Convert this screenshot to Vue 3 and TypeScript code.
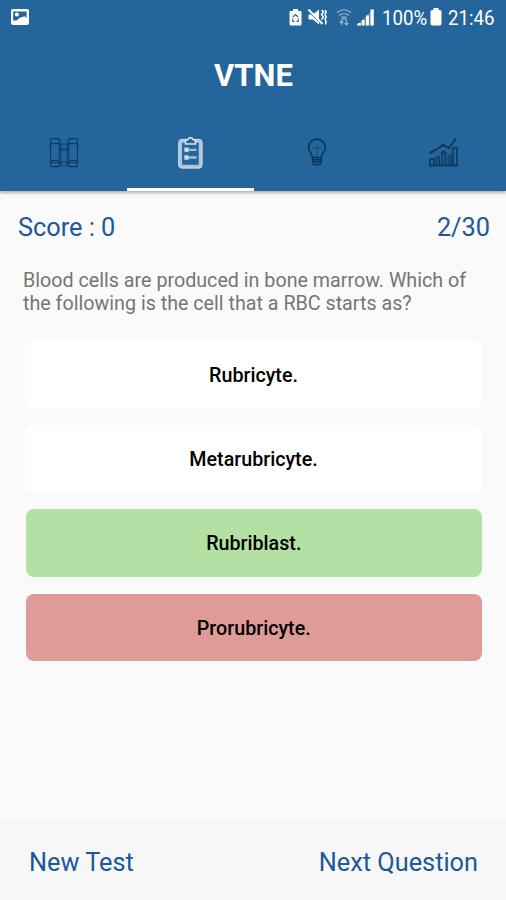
<script setup lang="ts">
import { ref } from 'vue'

interface Answer {
  text: string
  state: 'plain' | 'correct' | 'wrong'
}

const activeTab = ref<number>(1)
const tabs: string[] = ['library', 'quiz', 'hints', 'stats']
const answers: Answer[] = [
  { text: 'Rubricyte.', state: 'plain' },
  { text: 'Metarubricyte.', state: 'plain' },
  { text: 'Rubriblast.', state: 'correct' },
  { text: 'Prorubricyte.', state: 'wrong' },
]
</script>

<template>
  <div class="screen">
    <header class="header">
      <div class="status">
        <svg class="photo" width="18" height="16" viewBox="0 0 18 16">
          <rect width="18" height="16" rx="2" fill="#fff" />
          <path d="M2.200 2.500h13.400v6.500l-2-1.700-3.400 1-2.200 1-2 2-3.800.5z" fill="#24659b" />
          <circle cx="5.800" cy="5.600" r="2" fill="#fff" />
        </svg>
        <div class="status-right">
          <svg class="system" width="88" height="20" viewBox="0 0 88 20">
            <path d="M5 3V1h5v2h2.500q1 0 1 1v12q0 1.500-1.500 1.500H3Q1.500 17.500 1.500 16V4q0-1 1-1z" fill="#fff" />
            <path d="M4.800 9l2.700-2.500L10.200 9M4.800 10.500v3h1.700M10.200 10.500v3H8.500" fill="none" stroke="#24659b" stroke-width="1.200" />
            <path d="M20.500 6.500H25L31 1.500v15l-6-5h-4.500z" fill="#fff" />
            <path d="M20 2.500l14 14" stroke="#24659b" stroke-width="1.500" />
            <path d="M20.500 1.500l14 14.500" stroke="#fff" stroke-width="2" />
            <path d="M33.500 2l2 2-2 2.500 2 2.500-2 2.500M37 2l1.200 2-1.200 2.500 1.200 2.500-1.200 2.500 1.200 2.500-1 2.500" fill="none" stroke="#fff" stroke-width="1.500" />
            <g fill="none" stroke="#94b6d2" stroke-width="1.200">
              <path d="M49 4.500q7-5.500 14 0M51 7.500q5-4 10 0M53 10q3-2.500 6 0M56 10l-3 3M56 10l3 3M53.500 17v-4M51.500 15l2-2 2 2M58.500 13v4M56.500 15l2 2 2-2" />
            </g>
            <path d="M70 15h2.800v2.500H69zM73.800 12h2.800v5.500h-2.800zM78 7.500h2.900v10H78zM82.500 1.500h3.300v16h-3.300z" fill="#fff" />
            <path d="M68 17.500L85 1.500v16z" fill="#fff" opacity="0.25" />
          </svg>
          <span class="percent"><span class="narrow">100%</span></span>
          <svg class="battery" width="12" height="18" viewBox="0 0 12 18">
            <path d="M3.500 2V0h5v2H10q1.500 0 1.500 1.500v12q0 2-2 2h-7q-2 0-2-2v-12Q.5 2 2 2z" fill="#fff" />
          </svg>
          <span class="clock"><span class="narrow">21:46</span></span>
        </div>
      </div>
      <h1 class="title">VTNE</h1>
      <nav class="tabs">
        <button
          v-for="(tab, index) in tabs"
          :key="tab"
          class="tab"
          :class="{ active: activeTab === index }"
          @click="activeTab = index"
        >
          <svg v-if="tab === 'library'" width="30" height="30" viewBox="0 0 30 30" fill="none" stroke="#0c3a61" stroke-width="1.200">
            <rect x="1.500" y="0.700" width="9" height="28" rx="2" />
            <rect x="19.500" y="0.700" width="9" height="28" rx="2" />
            <path d="M1.500 5.700h9M19.500 5.700h9M1.500 22.500h9M1.500 24.300h9M19.500 22.500h9M19.500 24.300h9M10.500 6h9M10.500 11h9M10.500 24h9" />
            <path d="M11 12.500h8M11 28h8M12 6v22M18 6v22" stroke-width="0.700" />
          </svg>
          <svg v-else-if="tab === 'quiz'" width="30" height="32" viewBox="0.500 0 30 32" fill="none">
            <rect x="4.900" y="4" width="20" height="25.500" rx="2" stroke="#aec1de" stroke-width="3.400" />
            <rect x="3.200" y="2.400" width="23.400" height="28.700" rx="3" stroke="#dce7f2" stroke-width="0.900" />
            <path d="M10 3h2q1-2.300 3-2.300T18 3h2v4H10z" fill="#24659b" stroke="#dce7f2" stroke-width="1.500" />
            <circle cx="11" cy="12.800" r="2.300" fill="#d4e0ee" />
            <circle cx="11" cy="20.500" r="2.300" fill="#d4e0ee" />
            <path d="M9 10.300l4 5M13 10.300l-4 5M9 18l4 5M13 18l-4 5" stroke="#d4e0ee" />
            <path d="M13 12.800h8M13 20.500h8" stroke="#a4bdd9" stroke-width="2.300" />
          </svg>
          <svg v-else-if="tab === 'hints'" width="30" height="30" viewBox="0 0 30 30" fill="none" stroke="#0c3457" stroke-width="1.600">
            <path d="M10.500 19.500c0-4-4-5-4-10a8.400 8.400 0 0 1 16.800 0c0 5-4 6-4 10z" />
            <path d="M10.500 19.500v4h9v-4M11.500 24v2.500h7V24M10.500 21.500h9" />
            <path d="M11 9.500h8M14 9.500l1 2 1-2M15 12v7" stroke="#164a77" stroke-width="0.900" />
          </svg>
          <svg v-else width="30" height="30" viewBox="-1 0 30 30" fill="none" stroke="#0c3457" stroke-width="1.500">
            <path d="M2 14.500l7-4L14 7l6 3 6-8" stroke-width="1.600" />
            <g fill="#0c3457" stroke="none">
              <circle cx="2" cy="14.500" r="1.400" />
              <circle cx="14" cy="7" r="1.400" />
              <circle cx="20" cy="9.800" r="1.300" />
              <circle cx="26" cy="2" r="1.500" />
            </g>
            <path d="M1 21h4v6.500H1zM24 10h4v17.500h-4z" />
            <path d="M7 18.500h3.500v9H7zM12.500 15H17v12.500h-4.500zM19 17h3.500v10.500H19z" fill="#174f82" stroke="#113f69" stroke-width="1" />
            <path d="M12 15l2.700-1.700 2.800 1.700M0 27.500h29" stroke-width="1.300" />
          </svg>
        </button>
      </nav>
    </header>

    <main class="content">
      <div class="summary">
        <span class="score">Score : 0</span>
        <span class="progress">2/30</span>
      </div>
      <p class="question">Blood cells are produced in bone marrow. Which of the following is the cell that a RBC starts as?</p>
      <div class="answers">
        <button v-for="answer in answers" :key="answer.text" class="answer" :class="answer.state">
          {{ answer.text }}
        </button>
      </div>
    </main>

    <footer class="footer">
      <button class="action new">New Test</button>
      <button class="action next">Next Question</button>
    </footer>
  </div>
</template>

<style>
body {
  margin: 0;
}
</style>

<style scoped>
.screen {
  display: flex;
  flex-direction: column;
  width: 506px;
  height: 900px;
  overflow: hidden;
  background: #fafafa;
  font-family: Roboto, "Liberation Sans", sans-serif;
}
button {
  margin: 0;
  padding: 0;
  border: 0;
  background: none;
  font-family: inherit;
}
.header {
  height: 191px;
  flex: none;
  display: flex;
  flex-direction: column;
  background: #24659b;
  box-shadow: 0 2px 3px rgba(0, 0, 0, 0.3);
}
.status {
  box-sizing: border-box;
  height: 33px;
  display: flex;
  justify-content: space-between;
  align-items: flex-start;
  padding: 8px 11px 0 11px;
  border-bottom: 1px solid #205e93;
  color: #fff;
}
.photo {
  margin-top: 1px;
}
.status-right {
  display: flex;
  height: 20px;
}
.percent,
.clock {
  font-size: 21px;
  line-height: 20px;
  white-space: nowrap;
}
.narrow {
  display: inline-block;
  transform: scaleX(0.89);
  transform-origin: 0 50%;
}
.percent {
  width: 48px;
  margin-left: 6px;
}
.clock {
  width: 47px;
  margin-left: 6px;
}
.title {
  height: 80px;
  margin: 0;
  padding-left: 1px;
  color: #fff;
  font-size: 31px;
  font-weight: 700;
  line-height: 85px;
  text-align: center;
}
.tabs {
  flex: 1;
  display: grid;
  grid-template-columns: 127px 127px 126px 126px;
}
.tab {
  display: flex;
  justify-content: center;
  align-items: center;
  padding-top: 4px;
  border-bottom: 3px solid transparent;
}
.tab.active {
  border-bottom-color: #fff;
}
.content {
  flex: 1;
}
.summary {
  display: flex;
  justify-content: space-between;
  padding: 22px 16px 0 18px;
  color: #20579a;
  font-size: 25.3px;
  line-height: 30px;
}
.question {
  margin: 26px 24px 0 23px;
  color: #757575;
  font-size: 19.7px;
  line-height: 23px;
}
.answers {
  display: flex;
  flex-direction: column;
  gap: 17px;
  margin: 25.5px 24px 0 25px;
}
.answer {
  box-sizing: border-box;
  height: 67.4px;
  padding-top: 2px;
  border-radius: 8px;
  color: #000;
  font-size: 19.7px;
  font-weight: 470;
}
.plain {
  background: #fff;
}
.correct,
.wrong {
  margin: 0 0.5px 0 1px;
}
.correct {
  background: #b2e1a3;
}
.wrong {
  background: #de9b98;
}
.footer {
  height: 79px;
  display: flex;
  justify-content: space-between;
  padding: 0 28px 0 29px;
  background: #f7f7f7;
}
.action {
  padding-top: 4px;
  color: #20579a;
  font-size: 25.3px;
  line-height: 30px;
}
</style>
